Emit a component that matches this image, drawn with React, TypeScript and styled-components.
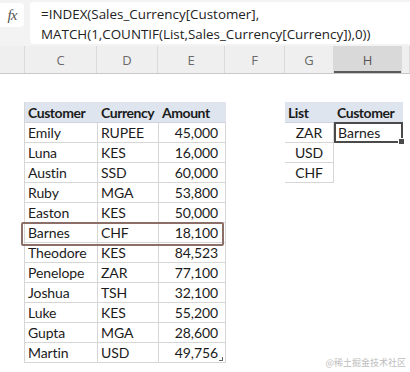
import React from 'react';
import styled, {createGlobalStyle} from 'styled-components';

const GlobalStyle = createGlobalStyle`
    html, body {
        margin: 0;
        padding: 0;
        background: #ffffff;
    }
    body {
        width: 410px;
        height: 372px;
        overflow: hidden;
        font-family: Lato, 'Open Sans', sans-serif;
    }
`;

// widths of the sheet columns: row gutter, C, D, E, F, G, H, rest
const COLUMNS = '25px 72px 61px 67px 60px 49px 68px 8px';
const LETTERS = ['C', 'D', 'E', 'F', 'G', 'H'];

const sales = [
    {customer: 'Emily', currency: 'RUPEE', amount: '45,000'},
    {customer: 'Luna', currency: 'KES', amount: '16,000'},
    {customer: 'Austin', currency: 'SSD', amount: '60,000'},
    {customer: 'Ruby', currency: 'MGA', amount: '53,800'},
    {customer: 'Easton', currency: 'KES', amount: '50,000'},
    {customer: 'Barnes', currency: 'CHF', amount: '18,100'},
    {customer: 'Theodore', currency: 'KES', amount: '84,523'},
    {customer: 'Penelope', currency: 'ZAR', amount: '77,100'},
    {customer: 'Joshua', currency: 'TSH', amount: '32,100'},
    {customer: 'Luke', currency: 'KES', amount: '55,200'},
    {customer: 'Gupta', currency: 'MGA', amount: '28,600'},
    {customer: 'Martin', currency: 'USD', amount: '49,756'},
];

const MARKED_ROW = 5;
const list = ['ZAR', 'USD', 'CHF'];

export default function App() {
    return (
        <>
            <GlobalStyle />
            <Window>
                <FormulaBar>
                    <FxButton>fx</FxButton>
                    <FormulaBox>
                        <FormulaLine>=INDEX(Sales_Currency[Customer],</FormulaLine>
                        <FormulaLine>MATCH(1,COUNTIF(List,Sales_Currency[Currency]),0))</FormulaLine>
                    </FormulaBox>
                </FormulaBar>

                <ColumnHeaders>
                    <HeaderCell />
                    {LETTERS.map((l) => (
                        <HeaderCell key={l} active={l === 'H'}>
                            {l}
                        </HeaderCell>
                    ))}
                    <HeaderCell />
                </ColumnHeaders>

                <Sheet>
                    <SalesTable>
                        <TableHead>Customer</TableHead>
                        <TableHead>Currency</TableHead>
                        <TableHead>Amount</TableHead>
                        {sales.map((row) => (
                            <React.Fragment key={row.customer}>
                                <Cell>{row.customer}</Cell>
                                <Cell>{row.currency}</Cell>
                                <Cell align='right'>{row.amount}</Cell>
                            </React.Fragment>
                        ))}
                        <Marker style={{top: 21 + MARKED_ROW * 20}} />
                        <ResizeHandle />
                    </SalesTable>

                    <LookupTable>
                        <TableHead>List</TableHead>
                        <TableHead>Customer</TableHead>
                        {list.map((code, i) => (
                            <React.Fragment key={code}>
                                <Cell align='center'>{code}</Cell>
                                {i === 0 ? (
                                    <ActiveCell>
                                        Barnes
                                        <FillHandle />
                                    </ActiveCell>
                                ) : (
                                    <EmptyCell />
                                )}
                            </React.Fragment>
                        ))}
                    </LookupTable>
                </Sheet>

                <Watermark>@稀土掘金技术社区</Watermark>
            </Window>
        </>
    );
}

const Window = styled.div`
    position: relative;
    width: 410px;
    height: 372px;
    background: #ffffff;
    overflow: hidden;
`;

const FormulaBar = styled.div`
    display: flex;
    align-items: flex-start;
    gap: 6px;
    height: 46px;
    padding-top: 2px;
    box-sizing: border-box;
    background: #f3f3f3;
`;

const FxButton = styled.div`
    width: 24px;
    height: 24px;
    margin-top: 1px;
    background: #ffffff;
    border-radius: 0 4px 4px 0;
    font-family: 'Liberation Serif', serif;
    font-style: italic;
    font-size: 15px;
    color: #555;
    display: flex;
    align-items: center;
    justify-content: center;
    letter-spacing: -1px;
`;

const FormulaBox = styled.div`
    flex: 1;
    height: 42px;
    background: #ffffff;
    border-radius: 4px 0 0 4px;
    padding: 1px 0 0 11px;
    box-sizing: border-box;
    font-family: 'Open Sans', sans-serif;
    font-size: 13.4px;
    color: #222;
    display: flex;
    flex-direction: column;
    justify-content: center;
`;

const FormulaLine = styled.div`
    line-height: 20px;
    white-space: nowrap;
`;

const ColumnHeaders = styled.div`
    display: grid;
    grid-template-columns: ${COLUMNS};
    height: 27px;
    background: #efefef;
    border-bottom: 1px solid #c8c8c8;
`;

const HeaderCell = styled.div<{active?: boolean}>`
    display: flex;
    align-items: center;
    justify-content: center;
    border-right: 1px solid #dadada;
    font-family: 'Open Sans', sans-serif;
    font-size: 13px;
    color: ${({active}) => (active ? '#555' : '#6a6a6a')};
    background: ${({active}) => (active ? '#d9d9d9' : 'transparent')};
    box-shadow: ${({active}) => (active ? 'inset 0 -2px 0 #5a5a5a' : 'none')};
`;

const Sheet = styled.div`
    display: grid;
    grid-template-columns: ${COLUMNS};
    padding-top: 28px;
    align-items: start;
`;

const SalesTable = styled.div`
    grid-column: 2 / 5;
    position: relative;
    display: grid;
    grid-template-columns: 73px 61px 67px;
    margin-left: -1px;
    border-left: 1px solid #d6d6d6;
`;

const LookupTable = styled.div`
    grid-column: 6 / 8;
    display: grid;
    grid-template-columns: 49px 69px;
`;

const TableHead = styled.div`
    height: 21px;
    display: flex;
    align-items: center;
    padding-left: 3px;
    background: #dfe5ee;
    font-weight: 700;
    font-size: 14px;
    letter-spacing: -0.45px;
    color: #1b1b1b;
    white-space: nowrap;
    border-bottom: 1px solid #d0d4da;
    box-sizing: border-box;
`;

const Cell = styled.div<{align?: 'left' | 'right' | 'center'}>`
    height: 20px;
    display: flex;
    align-items: center;
    justify-content: ${({align}) =>
        align === 'right' ? 'flex-end' : align === 'center' ? 'center' : 'flex-start'};
    padding: 0 ${({align}) => (align === 'right' ? '7px' : '3px')};
    font-size: 14px;
    letter-spacing: -0.1px;
    color: #1b1b1b;
    border-right: 1px solid #d6d6d6;
    border-bottom: 1px solid #d6d6d6;
    box-sizing: border-box;
    white-space: nowrap;
`;

const EmptyCell = styled.div`
    height: 20px;
`;

const ActiveCell = styled.div`
    position: relative;
    height: 21px;
    margin-top: -1px;
    display: flex;
    align-items: center;
    padding-left: 2px;
    font-size: 14px;
    color: #1b1b1b;
    border: 2px solid #4a4a4a;
    box-sizing: border-box;
`;

const FillHandle = styled.span`
    position: absolute;
    right: -4px;
    bottom: -4px;
    width: 5px;
    height: 5px;
    background: #4a4a4a;
    border: 1px solid #fff;
`;

const Marker = styled.div`
    position: absolute;
    left: -4px;
    right: 1px;
    height: 20px;
    margin-top: -1px;
    border: 2px solid #8c6e69;
    border-radius: 2px;
    pointer-events: none;
`;

const ResizeHandle = styled.span`
    position: absolute;
    right: 2px;
    bottom: 2px;
    width: 3px;
    height: 3px;
    border-right: 1px solid #666;
    border-bottom: 1px solid #666;
`;

const Watermark = styled.div`
    position: absolute;
    right: 4px;
    bottom: 3px;
    font-family: 'Noto Sans CJK SC', sans-serif;
    font-size: 9px;
    color: #bdbdbd;
`;
